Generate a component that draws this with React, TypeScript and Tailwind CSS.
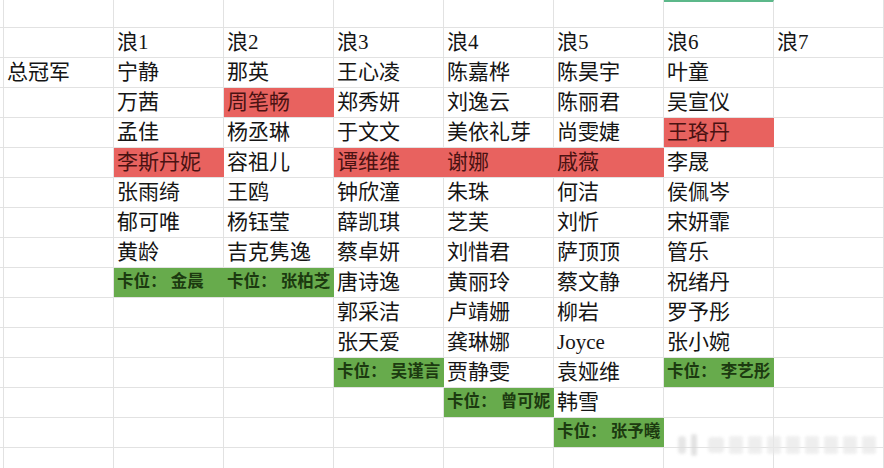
type Mark = "red" | "green" | undefined;

interface Cell {
  text: string;
  mark?: Mark;
}

const waves: Cell[][] = [
  [
    { text: "宁静" }, { text: "万茜" }, { text: "孟佳" }, { text: "李斯丹妮", mark: "red" },
    { text: "张雨绮" }, { text: "郁可唯" }, { text: "黄龄" }, { text: "卡位： 金晨", mark: "green" },
  ],
  [
    { text: "那英" }, { text: "周笔畅", mark: "red" }, { text: "杨丞琳" }, { text: "容祖儿" },
    { text: "王鸥" }, { text: "杨钰莹" }, { text: "吉克隽逸" }, { text: "卡位： 张柏芝", mark: "green" },
  ],
  [
    { text: "王心凌" }, { text: "郑秀妍" }, { text: "于文文" }, { text: "谭维维", mark: "red" },
    { text: "钟欣潼" }, { text: "薛凯琪" }, { text: "蔡卓妍" }, { text: "唐诗逸" },
    { text: "郭采洁" }, { text: "张天爱" }, { text: "卡位： 吴谨言", mark: "green" },
  ],
  [
    { text: "陈嘉桦" }, { text: "刘逸云" }, { text: "美依礼芽" }, { text: "谢娜", mark: "red" },
    { text: "朱珠" }, { text: "芝芙" }, { text: "刘惜君" }, { text: "黄丽玲" },
    { text: "卢靖姗" }, { text: "龚琳娜" }, { text: "贾静雯" }, { text: "卡位： 曾可妮", mark: "green" },
  ],
  [
    { text: "陈昊宇" }, { text: "陈丽君" }, { text: "尚雯婕" }, { text: "戚薇", mark: "red" },
    { text: "何洁" }, { text: "刘忻" }, { text: "萨顶顶" }, { text: "蔡文静" },
    { text: "柳岩" }, { text: "Joyce" }, { text: "袁娅维" }, { text: "韩雪" },
    { text: "卡位： 张予曦", mark: "green" },
  ],
  [
    { text: "叶童" }, { text: "吴宣仪" }, { text: "王珞丹", mark: "red" }, { text: "李晟" },
    { text: "侯佩岑" }, { text: "宋妍霏" }, { text: "管乐" }, { text: "祝绪丹" },
    { text: "罗予彤" }, { text: "张小婉" }, { text: "卡位： 李艺彤", mark: "green" },
  ],
  [],
];

const font = { fontFamily: '"Liberation Serif", "Noto Sans CJK SC", serif' };

function GridCell({ cell, top }: { cell?: Cell; top?: boolean }) {
  const mark = cell?.mark;
  const tone =
    mark === "red"
      ? "bg-[#e8625f] border-r-[#e8625f] text-[#4a1212] text-[21px]"
      : mark === "green"
      ? "bg-[#67ab4c] border-r-[#67ab4c] text-[#1c3a10] text-[16.5px] font-bold"
      : "border-r-[#e2e2e2] text-[#151515] text-[21px]";
  return (
    <div
      className={`flex items-center overflow-hidden whitespace-nowrap border-r pl-[3px] leading-none ${tone} ${
        top ? "border-t-2 border-t-[#5cb88a]" : ""
      }`}
    >
      {cell?.text}
    </div>
  );
}

export default function App() {
  const rowCount = 14;
  return (
    <div className="relative h-[468px] w-[884px] overflow-hidden bg-white" style={font}>
      {/* top blank row */}
      <div className="grid h-[28px] grid-cols-[4px_repeat(8,110px)] border-b border-[#e2e2e2]">
        <div className="border-r border-[#e2e2e2]" />
        {Array.from({ length: 8 }).map((_, c) => (
          <GridCell key={c} top={c === 6} />
        ))}
      </div>
      {/* header row */}
      <div className="grid h-[30px] grid-cols-[4px_repeat(8,110px)] border-b border-[#e2e2e2]">
        <div className="border-r border-[#e2e2e2]" />
        <GridCell />
        {waves.map((_, i) => (
          <GridCell key={i} cell={{ text: `浪${i + 1}` }} />
        ))}
      </div>
      {Array.from({ length: rowCount }).map((_, r) => (
        <div
          key={r}
          className="grid h-[30px] grid-cols-[4px_repeat(8,110px)] border-b border-[#e2e2e2]"
        >
          <div className="border-r border-[#e2e2e2]" />
          <GridCell cell={r === 0 ? { text: "总冠军" } : undefined} />
          {waves.map((col, c) => (
            <GridCell key={c} cell={col[r]} />
          ))}
        </div>
      ))}
      {/* faint blurred watermark */}
      <div className="absolute bottom-[12px] right-[8px] flex items-center gap-[5px] opacity-70 blur-[1.5px]">
        <div className="h-[18px] w-[8px] rounded-full bg-[#dcdcdc]" />
        <div className="h-[22px] w-[6px] rounded-full bg-[#d6d6d6]" />
        <div className="ml-[6px] h-[16px] w-[16px] rounded-[4px] bg-[#e6e6e6]" />
        {Array.from({ length: 8 }).map((_, i) => (
          <div key={i} className="h-[18px] w-[14px] rounded-[3px] bg-[#e8e8e8]" />
        ))}
      </div>
    </div>
  );
}
